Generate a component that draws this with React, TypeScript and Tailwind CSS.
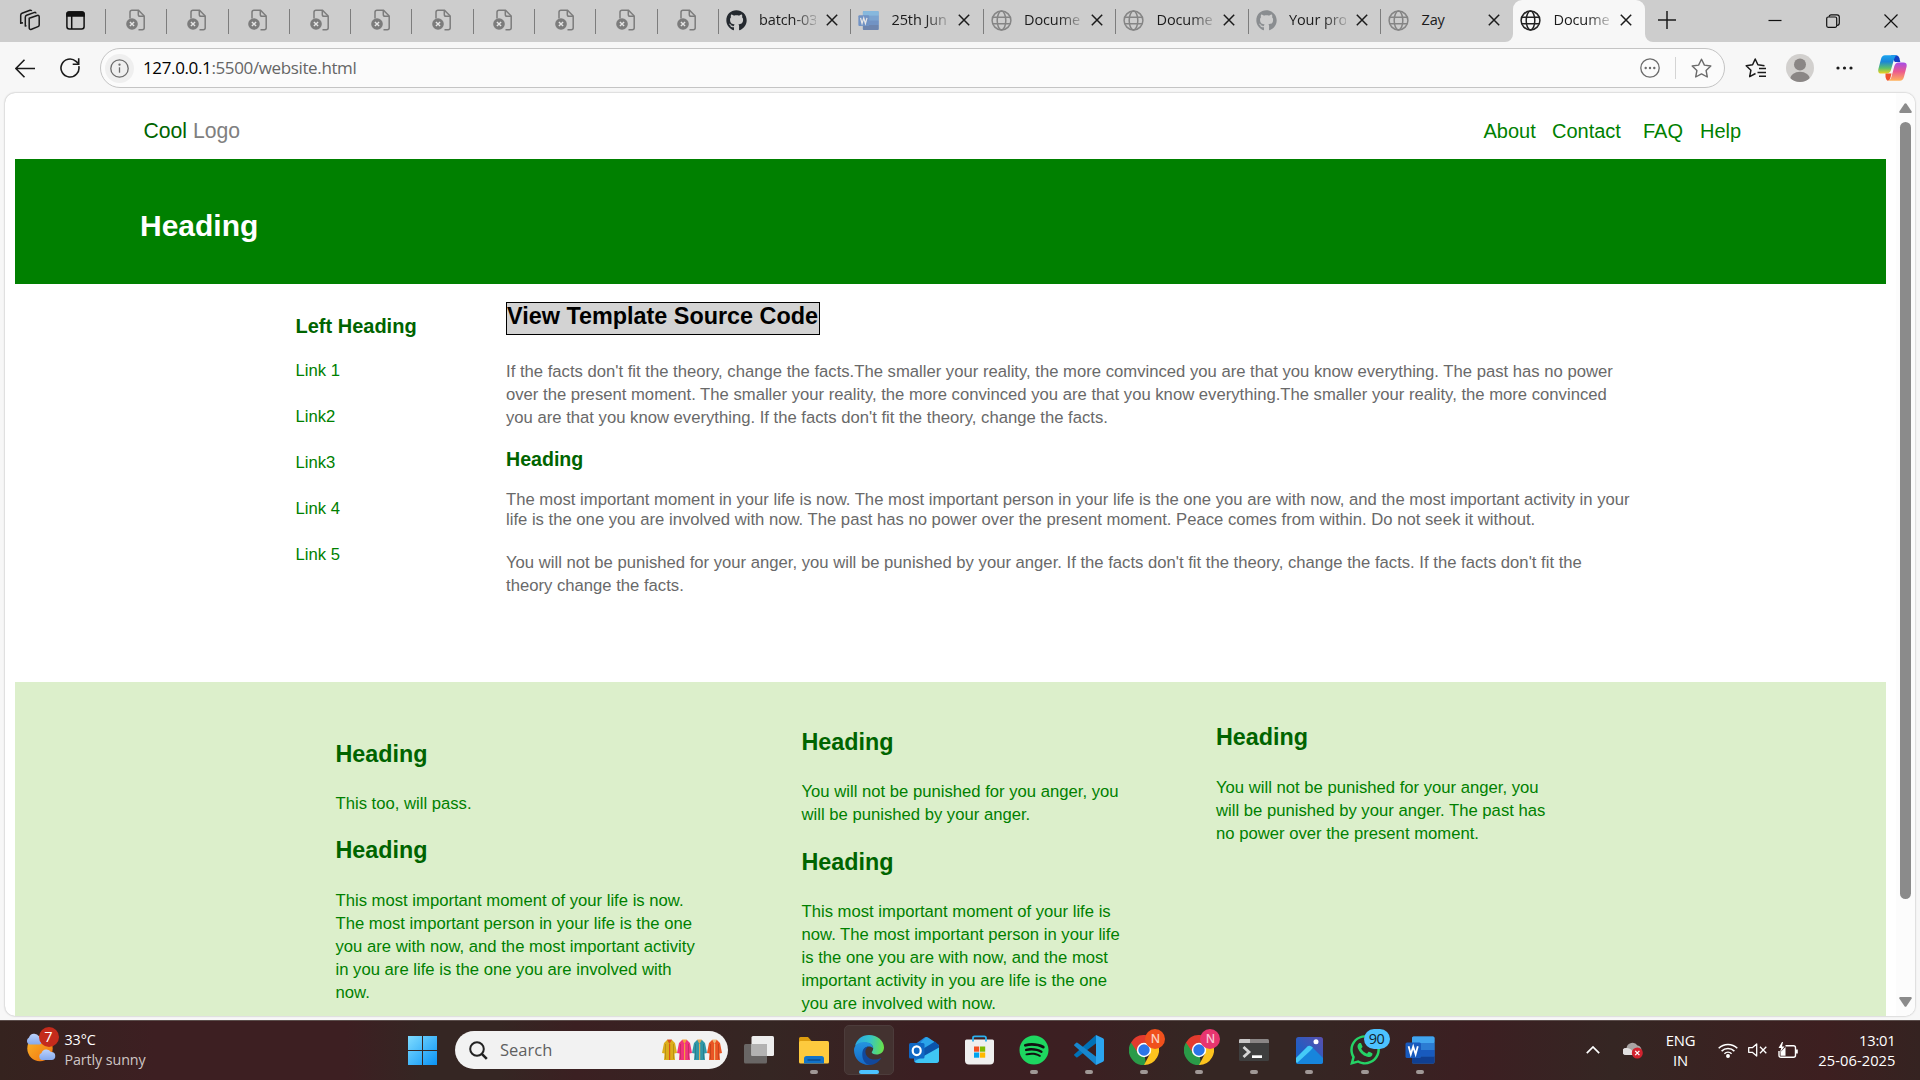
import React from 'react';
import { FaGithub, FaSpotify, FaWhatsapp } from 'react-icons/fa';

/* ---------- browser icons ---------- */

function BrokenPageIcon() {
  return (
    <svg width="20" height="22" viewBox="0 0 20 22" fill="none" stroke="#7c7c7c" strokeWidth="1.5">
      <path d="M4 9.5V3.2Q4 1.2 6 1.2H12.5L18.2 7V18.8Q18.2 20.8 16.2 20.8H12.5" />
      <path d="M12.3 1.4V5.4Q12.3 7.2 14 7.2H18" />
      <circle cx="6" cy="15" r="5.8" fill="#7c7c7c" stroke="none" />
      <path d="M3.9 12.9l4.2 4.2M8.1 12.9l-4.2 4.2" stroke="#e4e4e4" strokeWidth="1.4" />
    </svg>
  );
}

function GlobeIcon({ color }: { color: string }) {
  return (
    <svg width="21" height="21" viewBox="0 0 21 21" fill="none" stroke={color} strokeWidth="1.5">
      <circle cx="10.5" cy="10.5" r="9.4" />
      <ellipse cx="10.5" cy="10.5" rx="4.3" ry="9.4" />
      <path d="M1.8 7.2h17.4M1.8 13.8h17.4" />
    </svg>
  );
}

function WordIcon({ size }: { size: number }) {
  return (
    <svg width={size} height={size} viewBox="0 0 30 30">
      <rect x="7" y="1.5" width="22.5" height="27" rx="1.5" fill="#2b7cd3" />
      <rect x="7" y="1.5" width="22.5" height="7" rx="1.5" fill="#41a5ee" />
      <rect x="7" y="8" width="22.5" height="7" fill="#2b7cd3" />
      <rect x="7" y="15" width="22.5" height="6.5" fill="#185abd" />
      <path d="M7 21.5h22.5V27a1.5 1.5 0 0 1-1.5 1.5H8.5A1.5 1.5 0 0 1 7 27z" fill="#103f91" />
      <rect x="0.5" y="7.5" width="15.5" height="15.5" rx="1.5" fill="#185abd" />
      <path d="M3.6 11.2l2.2 8 2.4-7.6 2.4 7.6 2.2-8" fill="none" stroke="#fff" strokeWidth="1.8" />
    </svg>
  );
}

function CloseIcon() {
  return (
    <svg width="12" height="12" viewBox="0 0 12 12" stroke="#1b1b1b" strokeWidth="1.5">
      <path d="M.8.8l10.4 10.4M11.2.8L.8 11.2" />
    </svg>
  );
}

type Kind = 'github' | 'githubDim' | 'word' | 'globe' | 'globeDark';

function TabIcon({ kind }: { kind: Kind }) {
  if (kind === 'github') return <FaGithub size={21} color="#24292f" />;
  if (kind === 'githubDim') return <FaGithub size={21} color="#8a8d90" />;
  if (kind === 'word') return <span className="opacity-50"><WordIcon size={21} /></span>;
  return <GlobeIcon color={kind === 'globe' ? '#858585' : '#222222'} />;
}

function Tab({ kind, title, active }: { kind: Kind; title: string; active?: boolean }) {
  return (
    <div className={active
      ? 'relative -ml-px flex h-[42px] w-[132.5px] items-center rounded-t-[9px] bg-[#f7f7f7] pb-[2px] pl-[7.5px]'
      : 'flex h-[42px] w-[132.5px] items-center pb-[2px] pl-[7px]'}>
      {active && (
        <>
          <svg className="absolute bottom-0 -left-2" width="8" height="8"><path d="M8 0V8H0A8 8 0 0 0 8 0" fill="#f7f7f7" /></svg>
          <svg className="absolute -right-2 bottom-0" width="8" height="8"><path d="M0 0V8H8A8 8 0 0 1 0 0" fill="#f7f7f7" /></svg>
        </>
      )}
      <span className="flex w-[21px] shrink-0 justify-center"><TabIcon kind={kind} /></span>
      <span className={title === 'Zay'
        ? 'ml-[12px] w-[57px] overflow-hidden text-[14.5px] leading-5 tracking-[-0.1px] whitespace-nowrap text-[#1b1b1b]'
        : 'ml-[12px] w-[57px] overflow-hidden [mask-image:linear-gradient(to_right,#000_60%,rgba(0,0,0,0.2)_100%)] text-[14.5px] leading-5 tracking-[-0.1px] whitespace-nowrap text-[#1b1b1b]'}>
        {title}
      </span>
      <span className="ml-[10px]"><CloseIcon /></span>
    </div>
  );
}

function Sep() {
  return <div className="-ml-px h-[25px] w-px shrink-0 bg-[#7d7d7d]" />;
}

function TabStrip() {
  return (
    <div className="flex h-[42px] items-center bg-[#cdcdcd]">
      <div className="flex w-[106px] shrink-0 items-center pb-[2px] pl-[19px]">
        <svg width="22" height="22" viewBox="0 0 22 22" fill="none" stroke="#1b1b1b" strokeWidth="1.5" strokeLinejoin="round">
          <path d="M10.2 9.3l8-2.8q2-.6 2 1.4v8q0 1.2-1.2 1.7l-6.5 2.6q-2.3.8-2.3-1.5z" />
          <path d="M7.5 16.6L6.3 17V8.2q0-1.4 1.3-1.9l8-2.9q1.3-.3 1.3 1.2" />
          <path d="M4 13.8l-2.3.5V6.2q0-1.4 1.3-1.9L11 1.3q1.3-.4 1.6.8" />
        </svg>
        <svg className="ml-[25px]" width="19" height="19" viewBox="0 0 19 19" fill="none" stroke="#111" strokeWidth="1.5">
          <rect x=".9" y=".9" width="17.2" height="17.2" rx="2.5" />
          <path d="M1 5V3q0-2 2-2h13q2 0 2 2v2z" fill="#111" />
          <path d="M5.7 5v13" />
        </svg>
      </div>
      {Array.from({ length: 10 }, (_, i) => (
        <React.Fragment key={i}>
          <Sep />
          <div className="flex w-[61.3px] shrink-0 justify-center pr-[2px] pb-[2px]"><BrokenPageIcon /></div>
        </React.Fragment>
      ))}
      <Sep /><Tab kind="github" title="batch-03" />
      <Sep /><Tab kind="word" title="25th Jun" />
      <Sep /><Tab kind="globe" title="Docume" />
      <Sep /><Tab kind="globe" title="Docume" />
      <Sep /><Tab kind="githubDim" title="Your pro" />
      <Sep /><Tab kind="globe" title="Zay" />
      <Tab kind="globeDark" title="Docume" active />
      <svg className="mb-[3px] ml-[12.5px]" width="18" height="18" viewBox="0 0 18 18" stroke="#1b1b1b" strokeWidth="1.5"><path d="M9 0v18M0 9h18" /></svg>
      <div className="ml-auto flex items-center pr-[22px]">
        <svg width="14" height="14" viewBox="0 0 14 14" stroke="#111" strokeWidth="1.2"><path d="M.5 6.5h13" /></svg>
        <svg className="ml-[44px]" width="14" height="14" viewBox="0 0 14 14" fill="none" stroke="#111" strokeWidth="1.2">
          <rect x=".7" y="3" width="10" height="10.3" rx="1.5" />
          <path d="M3.2 2.8Q3.2.8 5.2.8H11q2.3 0 2.3 2.3V9q0 2.2-2.3 2.5" />
        </svg>
        <svg className="ml-[44px]" width="14" height="14" viewBox="0 0 14 14" stroke="#111" strokeWidth="1.2"><path d="M.5.5l13 13M13.5.5l-13 13" /></svg>
      </div>
    </div>
  );
}

function Toolbar() {
  return (
    <div className="flex h-[51px] items-center bg-[#f7f7f7] pt-px">
      <svg className="ml-[15px]" width="20" height="19" viewBox="0 0 20 19" fill="none" stroke="#1b1b1b" strokeWidth="1.6"><path d="M20 9.5H1M9.5.8L.9 9.5l8.6 8.7" /></svg>
      <svg className="ml-[25px]" width="20" height="20" viewBox="0 0 20 20" fill="none" stroke="#1b1b1b" strokeWidth="1.6">
        <path d="M18.8 8.2A9 9 0 1 1 16 3.3L18.6 5.6" /><path d="M18.7.3v5.900h-6" />
      </svg>
      <div className="ml-[20px] flex h-[40px] w-[1625px] shrink-0 items-center rounded-full border border-[#c4c4c4] bg-[#fbfbfb]">
        <span className="ml-[4px] flex h-[29px] w-[29px] items-center justify-center rounded-full bg-[#efefef]">
          <svg width="19" height="19" viewBox="0 0 19 19" fill="none" stroke="#6b6b6b" strokeWidth="1.3"><circle cx="9.5" cy="9.5" r="8.7" /><path d="M9.5 8.3v5.4" /><circle cx="9.5" cy="5.7" r=".5" /></svg>
        </span>
        <span className="ml-[9px] text-[17px] leading-6 tracking-[-0.37px] text-[#666]"><span className="text-black">127.0.0.1</span>:5500/website.html</span>
        <div className="ml-auto flex items-center pr-[12px]">
          <svg width="20" height="20" viewBox="0 0 20 20" fill="none" stroke="#6b6b6b" strokeWidth="1.3"><circle cx="10" cy="10" r="9.2" /><g fill="#6b6b6b" stroke="none"><circle cx="5.7" cy="10" r="1.2" /><circle cx="10" cy="10" r="1.2" /><circle cx="14.3" cy="10" r="1.2" /></g></svg>
          <span className="mr-[15px] ml-[15px] h-[22px] w-px bg-[#d4d4d4]" />
          <svg width="21" height="21" viewBox="0 0 21 21" fill="none" stroke="#6b6b6b" strokeWidth="1.4" strokeLinejoin="round"><path d="M10.5 1.2l2.9 5.9 6.4.9-4.7 4.5 1.2 6.5-5.8-3.1L4.7 19l1.2-6.5L1.2 8l6.4-.9z" /></svg>
        </div>
      </div>
      <svg className="ml-[19.5px]" width="21" height="20" viewBox="0 0 21 20" fill="none" stroke="#1b1b1b" strokeWidth="1.5" strokeLinejoin="round"><path d="M10.5 15.5L4.7 18.7l1.2-6.5L1.2 7.7l6.4-.9L10.2 1l2.7 5.8 6.6.9" /><path d="M14 10.5h7M12.5 14.4H21M14 18.3h7" /></svg>
      <span className="ml-[20.5px] flex h-[28px] w-[28px] overflow-hidden rounded-full bg-[#d2d0ce]">
        <svg width="28" height="28" viewBox="0 0 28 28" fill="#8a8685"><circle cx="14" cy="10.5" r="6" /><ellipse cx="14" cy="25" rx="10" ry="7.2" /></svg>
      </span>
      <svg className="ml-[22px]" width="17" height="4" viewBox="0 0 17 4" fill="#1b1b1b"><circle cx="2" cy="2" r="1.6" /><circle cx="8.5" cy="2" r="1.6" /><circle cx="15" cy="2" r="1.6" /></svg>
      <svg className="ml-[25px]" width="29" height="26" viewBox="0 0 29 26">
        <defs>
          <linearGradient id="cpa" x1="0" y1="0" x2="0" y2="1"><stop offset="0" stopColor="#1aa5f0" /><stop offset=".35" stopColor="#1b86d8" /><stop offset=".7" stopColor="#5cc06b" /><stop offset="1" stopColor="#f2d21c" /></linearGradient>
          <linearGradient id="cpb" x1="0" y1="0" x2="0" y2="1"><stop offset="0" stopColor="#a54ce8" /><stop offset=".5" stopColor="#ec5a8f" /><stop offset="1" stopColor="#ffb35c" /></linearGradient>
        </defs>
        <path d="M13 .3h5q2.5 0 3.4 3l.9 3.7h-5.5z" fill="#1441c4" />
        <path d="M7 .3h12q-2 .5-3 4l-3 10.5q-1 3.8-4.5 3.8H3.5Q-.6 18.6.4 14L3 4Q4 .3 7 .3z" fill="url(#cpa)" />
        <path d="M7.5 18.6h6l-1 4q-.5 2.5-2.5 3.1Q8.3 25.7 7.5 22z" fill="#f0512e" />
        <path d="M22 25.7H10q2.5-.5 3.5-4L16.3 11.3Q17.3 7.5 20.5 7.5h5q4 0 3 4.5L26 21.7q-1 4-4 4z" fill="url(#cpb)" />
      </svg>
    </div>
  );
}

/* ---------- web page ---------- */

function Lines({ lines, tight }: { lines: string[]; tight?: boolean }) {
  return (
    <p className={tight ? 'text-[16.667px] leading-[20px]' : 'text-[16.667px] leading-[23px]'}>
      {lines.map((l) => <span key={l} className="block whitespace-nowrap">{l}</span>)}
    </p>
  );
}

function FootHeading() {
  return <h2 className="text-[23.333px] leading-[28px] font-bold text-[#006400]">Heading</h2>;
}

function Page() {
  return (
    <div className="flex h-[924px] bg-[#f7f7f7] pr-[5px] pb-px pl-[5px]">
      <div className="flex w-full overflow-hidden rounded-[10px] bg-white shadow-[0_0_2px_rgba(0,0,0,0.35)]">
        <div className="ml-[10px] w-[1871px] shrink-0 font-['Liberation_Sans',Arial,sans-serif]">
          <header className="flex h-[66px] pt-[26px] leading-6">
            <div className="ml-[128.5px] text-[21.2px] text-[#808080]"><span className="text-[#006400]">Cool</span> Logo</div>
            <nav className="ml-auto flex w-[402.5px] text-[20px] text-[#008000]">
              <a className="w-[68.5px]">About</a><a className="w-[91px]">Contact</a><a className="w-[57px]">FAQ</a><a>Help</a>
            </nav>
          </header>
          <section className="h-[125px] bg-[#008000] pt-[49px] pl-[125px]">
            <h1 className="text-[30px] leading-[36px] font-bold text-white">Heading</h1>
          </section>
          <main className="flex h-[398px] text-[#696969]">
            <aside className="ml-[280.5px] w-[210.5px] pt-[30px]">
              <h3 className="text-[20px] leading-6 font-bold text-[#006400]">Left Heading</h3>
              <ul className="mt-[21px] text-[16.667px] leading-[23px] text-[#008000]">
                {['Link 1', 'Link2', 'Link3', 'Link 4', 'Link 5'].map((l) => <li key={l} className="mb-[23px]">{l}</li>)}
              </ul>
            </aside>
            <article className="pt-[18px]">
              <h2 className="h-[33px] w-[314px] border border-black bg-[#d3d3d3] text-[23.4px] leading-[26px] font-bold whitespace-nowrap text-black">View Template Source Code</h2>
              <div className="mt-[25px]"><Lines lines={[
                "If the facts don't fit the theory, change the facts.The smaller your reality, the more comvinced you are that you know everything. The past has no power",
                'over the present moment. The smaller your reality, the more convinced you are that you know everything.The smaller your reality, the more convinced',
                "you are that you know everything. If the facts don't fit the theory, change the facts.",
              ]} /></div>
              <h3 className="mt-[18px] text-[19.6px] leading-6 font-bold text-[#006400]">Heading</h3>
              <div className="mt-[19px]"><Lines tight lines={[
                'The most important moment in your life is now. The most important person in your life is the one you are with now, and the most important activity in your',
                'life is the one you are involved with now. The past has no power over the present moment. Peace comes from within. Do not seek it without.',
              ]} /></div>
              <div className="mt-[21px]"><Lines lines={[
                "You will not be punished for your anger, you will be punished by your anger. If the facts don't fit the theory, change the facts. If the facts don't fit the",
                'theory change the facts.',
              ]} /></div>
            </article>
          </main>
          <footer className="flex h-[334px] bg-[#dcefcb] pl-[320.5px] text-[#008000]">
            <div className="w-[466px] pt-[58px]">
              <FootHeading />
              <div className="mt-[24px]"><Lines lines={['This too, will pass.']} /></div>
              <div className="mt-[21px]"><FootHeading /></div>
              <div className="mt-[25px]"><Lines lines={['This most important moment of your life is now.', 'The most important person in your life is the one', 'you are with now, and the most important activity', 'in you are life is the one you are involved with', 'now.']} /></div>
            </div>
            <div className="w-[414.5px] pt-[46px]">
              <FootHeading />
              <div className="mt-[24px]"><Lines lines={['You will not be punished for you anger, you', 'will be punished by your anger.']} /></div>
              <div className="mt-[22px]"><FootHeading /></div>
              <div className="mt-[24px]"><Lines lines={['This most important moment of your life is', 'now. The most important person in your life', 'is the one you are with now, and the most', 'important activity in you are life is the one', 'you are involved with now.']} /></div>
            </div>
            <div className="pt-[41px]">
              <FootHeading />
              <div className="mt-[25px]"><Lines lines={['You will not be punished for your anger, you', 'will be punished by your anger. The past has', 'no power over the present moment.']} /></div>
            </div>
          </footer>
        </div>
        <div className="ml-auto flex w-[19px] flex-col items-center bg-[#fcfcfc] pt-[10px] pb-[9px]">
          <svg width="13" height="10" viewBox="0 0 13 10"><path d="M5.5.8q1-1.2 2 0L12.7 8.5q.4 1.5-1 1.5H1.3Q-.1 10 .3 8.5z" fill="#8b8b8b" /></svg>
          <div className="mt-[9px] h-[777px] w-[11px] rounded-full bg-[#8b8b8b]" />
          <svg className="mt-auto" width="13" height="10" viewBox="0 0 13 10"><path d="M5.5 9.2q1 1.2 2 0L12.7 1.5q.4-1.5-1-1.5H1.3Q-.1 0 .3 1.5z" fill="#8b8b8b" /></svg>
        </div>
      </div>
    </div>
  );
}

/* ---------- taskbar ---------- */

function Weather() {
  return (
    <div className="relative h-[34px] w-[36px]">
      <svg width="36" height="34" viewBox="0 0 36 34">
        <defs>
          <linearGradient id="sun" x1="0" y1="0" x2="1" y2="1"><stop offset="0" stopColor="#fbb829" /><stop offset="1" stopColor="#f0700f" /></linearGradient>
          <linearGradient id="cl" x1="0" y1="0" x2="0" y2="1"><stop offset="0" stopColor="#bcd2fb" /><stop offset="1" stopColor="#84a9ee" /></linearGradient>
        </defs>
        <circle cx="15" cy="15.500" r="12.700" fill="url(#sun)" />
        <path d="M4 11.500a4 4 0 0 1 0-7A5.500 5.500 0 0 1 14 3.500 4.400 4.400 0 0 1 15 11.500z" fill="url(#cl)" />
        <path d="M16.500 27a3.800 3.800 0 0 1 0-7 5.300 5.300 0 0 1 9.500-1 4 4 0 0 1 .5 8z" fill="url(#cl)" />
      </svg>
      <span className="absolute -top-[6px] left-[13.5px] flex h-[20px] w-[20px] items-center justify-center rounded-full bg-[#c42b1c] text-[14.5px] text-white">7</span>
    </div>
  );
}

function Coat({ a, b }: { a: string; b: string }) {
  return (
    <svg width="15" height="22" viewBox="0 0 15 22">
      <path d="M5 1h5l3 3 2 10-2.5.5L13 21H2l.5-6.5L0 14 2 4z" fill={a} />
      <path d="M5 .5h5L7.5 5zM7 5h1.2v16H7z" fill={b} />
      <path d="M3.500 5v15M11.500 5v15" stroke="#000" strokeOpacity=".2" strokeWidth=".8" />
    </svg>
  );
}

function TaskView() {
  return (
    <svg width="30" height="28" viewBox="0 0 30 28">
      <rect x="0" y="8" width="23" height="19.5" rx="1.5" fill="#696665" />
      <rect x="7.5" y="0" width="22.5" height="20" rx="1.5" fill="#ededed" />
      <rect x="7.5" y="8" width="15.5" height="12" fill="#b3b2b2" />
    </svg>
  );
}

function Explorer() {
  return (
    <svg width="30" height="27" viewBox="0 0 30 27">
      <path d="M0 1.5Q0 0 1.5 0H9l3.500 4H28V12H0z" fill="#dd9d0f" />
      <rect x="0" y="4" width="30" height="22.5" rx="1.5" fill="#fdca3e" />
      <path d="M5 26.5V21.5q0-2.5 2.5-2.5h15q2.5 0 2.5 2.5v5z" fill="#1173c9" />
      <path d="M8.5 23h13" stroke="#0a4b8d" strokeWidth="1.5" />
    </svg>
  );
}

function Edge() {
  return (
    <svg width="30" height="30" viewBox="0 0 30 30">
      <defs>
        <linearGradient id="ea" x1="0" y1=".3" x2="1" y2=".4"><stop offset="0" stopColor="#2aa7e6" /><stop offset=".5" stopColor="#35c3c9" /><stop offset="1" stopColor="#68e24a" /></linearGradient>
        <linearGradient id="eb" x1="0" y1="0" x2="0" y2="1"><stop offset="0" stopColor="#2494e0" /><stop offset="1" stopColor="#1468c6" /></linearGradient>
      </defs>
      <path d="M1 11C2.5 4.5 8 0 15 0c8.5 0 15 6 15 12.5 0 4.5-3.5 7-7.5 7-3 0-4.8-1.2-4.8-2.3 0-.8 1.5-1.5 1.5-4 0-2.7-2.7-5.5-7-5.5C6.5 7.7 2.5 9.5 1 11z" fill="url(#ea)" />
      <path d="M0 15c0-5 5-8 10.5-8 5 0 8.7 2.8 8.7 6.2-1-1.2-2.7-1.7-4.2-1.7-4 0-6 3-6 6.5C9 24 13 29.5 18 29.7 8 31.5 0 24.5 0 15z" fill="url(#eb)" />
      <path d="M15 11.5c-3 1-3.7 3.5-3.5 6 .4 4.5 5 7.5 10 7 3-.3 4.5-1.5 5.7-1.5C25 27 20.5 30 15.5 30 11 29 8 24.5 8.3 18.5 8.500 14 11 11.500 15 11.500z" fill="#12489b" />
    </svg>
  );
}

function Outlook() {
  return (
    <svg width="30" height="28" viewBox="0 0 30 28">
      <path d="M5 9L15.5 1.5q1.5-1 3 0L30 9v15q0 3-3 3H8q-3 0-3-3z" fill="#1d7fd6" />
      <path d="M12 6L17 1q1 0 2 .5l7 4.7L13 15z" fill="#2aa4ea" />
      <path d="M26 5.5l4 4v3L14 23l-2-9z" fill="#0b54ab" />
      <path d="M30 11.5V24q0 3-3 3H9q-2.500 0-3.500-1.700z" fill="#3fc6f5" />
      <rect x="0" y="7" width="15.5" height="15.5" rx="1.5" fill="#0f67c4" />
      <ellipse cx="7.7" cy="14.7" rx="4" ry="4.4" fill="none" stroke="#fff" strokeWidth="2.2" />
    </svg>
  );
}

function Store() {
  return (
    <svg width="29" height="30" viewBox="0 0 29 30">
      <path d="M0 6q0-1.500 1.500-1.500h26Q29 4.500 29 6v19.500q0 4-4 4H4q-4 0-4-4z" fill="#efefef" />
      <path d="M8 6.500V3q0-1.700 1.700-1.700h9.600Q21 1.300 21 3v3.500" fill="none" stroke="#2cb0ee" strokeWidth="1.8" />
      <rect x="9" y="11.5" width="5.2" height="5.2" fill="#f25022" /><rect x="15" y="11.5" width="5.2" height="5.2" fill="#7fba00" />
      <rect x="9" y="17.5" width="5.2" height="5.2" fill="#00a4ef" /><rect x="15" y="17.5" width="5.2" height="5.2" fill="#ffb900" />
    </svg>
  );
}

function VsCode() {
  return (
    <svg width="30" height="30" viewBox="0 0 30 30">
      <path d="M22 0L22.5 8 3.5 22.3q-.7.5-1.3 0L.4 20.6q-.7-.7 0-1.4z" fill="#0072b8" />
      <path d="M22 30l.5-8L3.5 7.7q-.7-.5-1.3 0L.4 9.4q-.7.7 0 1.4z" fill="#1787cf" />
      <path d="M22 0l7 3.3q1 .5 1 1.7v20q0 1.2-1 1.7L22 30z" fill="#2ba5f0" />
    </svg>
  );
}

function Chrome() {
  return (
    <svg width="30" height="30" viewBox="0 0 30 30">
      <path d="M15 15l2 15A15 15 0 0 1 2 7.5z" fill="#2a9b48" />
      <path d="M21.1 18.5L15 30a15 15 0 0 0 13-22.5H15z" fill="#fcc31e" />
      <path d="M15 7.5h13A15 15 0 0 0 2 7.5L9 18z" fill="#e33b2e" />
      <circle cx="15" cy="15" r="7.2" fill="#fff" /><circle cx="15" cy="15" r="5.7" fill="#2b75e8" />
    </svg>
  );
}

function Terminal() {
  return (
    <svg width="30" height="22" viewBox="0 0 30 22">
      <rect width="30" height="22" rx="1.5" fill="#3f3f3f" />
      <path d="M0 4V1.5Q0 0 1.5 0H28.5Q30 0 30 1.5V4z" fill="#8a8686" />
      <path d="M0 4V1.5Q0 0 1.5 0H11v4z" fill="#c9c7c7" />
      <path d="M4.5 8l5.5 5-5.5 5" fill="none" stroke="#d6d6d6" strokeWidth="2.8" />
      <rect x="13" y="16.3" width="10" height="2.7" fill="#fff" />
    </svg>
  );
}

function Photos() {
  return (
    <svg width="27" height="27" viewBox="0 0 27 27">
      <defs><linearGradient id="ph" x1="0" y1="1" x2="1" y2="0"><stop offset=".3" stopColor="#1e5fc4" /><stop offset="1" stopColor="#5a4fae" /></linearGradient></defs>
      <rect width="27" height="27" rx="2.5" fill="url(#ph)" />
      <path d="M0 21L11.5 9.5q2-1.5 4 0L27 21v3.5q0 2.5-2.5 2.5h-22Q0 27 0 24.5z" fill="#1785dc" />
      <path d="M1 26L14 14l3-3.2Q13.5 7.5 11.5 9.5L0 21v3.5z" fill="#45cbf7" />
      <circle cx="20" cy="4.7" r="2.5" fill="#fff" />
    </svg>
  );
}

function TaskbarApp({ children, running = true, active }: { children: React.ReactNode; running?: boolean; active?: boolean }) {
  return (
    <div className="flex w-[55.05px] shrink-0 justify-center">
      <div className={active
        ? 'relative flex h-[50px] w-[50px] items-center justify-center rounded-[5px] border border-[#4c3c3b] bg-[#433230]'
        : 'relative flex h-[50px] w-[50px] items-center justify-center'}>
        {children}
        {active
          ? <span className="absolute bottom-0 left-[14px] h-[4px] w-[20px] rounded-full bg-[#4cc2ff]" />
          : running && <span className="absolute bottom-px left-[21px] h-[4px] w-[8px] rounded-full bg-[#a09896]" />}
      </div>
    </div>
  );
}

function ProfileBadge({ pink }: { pink?: boolean }) {
  return (
    <span className={pink
      ? 'absolute top-[4px] left-[26px] flex h-[20px] w-[20px] items-center justify-center rounded-full bg-[#e8356f] text-[12px] font-semibold text-[#f9c3d4]'
      : 'absolute top-[4px] left-[26px] flex h-[20px] w-[20px] items-center justify-center rounded-full bg-[#f0501c] text-[12px] font-semibold text-[#fbd0c0]'}>N</span>
  );
}

function Tray() {
  return (
    <div className="ml-auto flex items-center pr-[24.5px] pb-px text-white">
      <svg width="14" height="8" viewBox="0 0 14 8" fill="none" stroke="#fff" strokeWidth="1.7"><path d="M.8 7.2L7 1l6.2 6.2" /></svg>
      <svg className="ml-[23px]" width="20" height="18" viewBox="0 0 20 18">
        <path d="M3.5 14a3.5 3.5 0 0 1 0-7A6 6 0 0 1 14.5 4.5 4.8 4.8 0 0 1 14 14z" fill="#a8a4a3" />
        <path d="M3 14a3.5 3.5 0 0 1 0-7q5-1 9 7z" fill="#e2e0e0" />
        <circle cx="14.3" cy="12" r="5.5" fill="#d2232f" /><path d="M12.2 9.9l4.2 4.2M16.4 9.9l-4.2 4.2" stroke="#fff" strokeWidth="1.3" />
      </svg>
      <div className="ml-[18px] w-[40px] text-center text-[14.8px] leading-5 tracking-[-0.2px]">ENG<br />IN</div>
      <svg className="ml-[17px]" width="20" height="16" viewBox="0 0 20 16" fill="none" stroke="#fff" strokeWidth="1.5">
        <path d="M.7 6.3a13 13 0 0 1 18.6 0" /><path d="M3.6 9.1a9 9 0 0 1 12.8 0" /><path d="M6.4 11.8a5.2 5.2 0 0 1 7.2 0" /><circle cx="10" cy="14" r="1.2" fill="#fff" />
      </svg>
      <svg className="ml-[10px]" width="19" height="14" viewBox="0 0 19 14" fill="none" stroke="#fff" strokeWidth="1.3" strokeLinejoin="round">
        <path d="M.7 4.7h3.6L8.7.9v12.2L4.3 9.3H.7z" /><path d="M12 3.8l6.3 6.4M18.3 3.8L12 10.2" />
      </svg>
      <svg className="ml-[11px]" width="20" height="17" viewBox="0 0 20 17" fill="none" stroke="#fff" strokeWidth="1.4">
        <path d="M7.5 3.7H15.5q2 0 2 2v7.5q0 2-2 2H3q-2 0-2-2V9" /><path d="M18.8 7.5v4" strokeWidth="2" />
        <path d="M2.5 13.7V10l5-5v8.7z" fill="#fff" stroke="none" /><path d="M4 0L.5 6h2.7L2 10.5 6.5 4.5H4L5 0z" fill="#fff" stroke="none" />
      </svg>
      <div className="ml-[20px] w-[78px] pb-px text-right text-[14.7px] leading-5 whitespace-nowrap">
        <div className="tracking-[-0.2px]">13:01</div><div className="-ml-2 tracking-[0.05px]">25-06-2025</div>
      </div>
    </div>
  );
}

function Taskbar() {
  return (
    <div className="flex h-[60px] items-center border-t border-[#5b4d4b] bg-[linear-gradient(90deg,#35231f_0%,#3d1f22_8%,#3d1f22_18%,#352623_22%,#352623_26%,#3b2022_30%,#352623_40%,#3b1f22_48%,#3c1f22_56%,#352623_62%,#352623_68%,#3c1f22_77%,#352623_84%,#3d1f20_95%,#352321_100%)]">
      <div className="flex w-[408px] shrink-0 items-center pb-[2px] pl-[25px]">
        <Weather />
        <div className="ml-[3.5px] text-[14.3px] leading-5 tracking-[-0.1px] text-white"><div>33°C</div><div className="text-[#cfc6c5]">Partly sunny</div></div>
      </div>
      <svg width="29" height="29" viewBox="0 0 29 29">
        <defs><linearGradient id="win" x1="0" y1="0" x2="1" y2="1"><stop offset="0" stopColor="#7fdcff" /><stop offset="1" stopColor="#0a93f5" /></linearGradient></defs>
        <path d="M0 0h14v14H0zM15 0h14v14H15zM0 15h14v14H0zM15 15h14v14H15z" fill="url(#win)" />
      </svg>
      <div className="mb-px ml-[18px] flex h-[38px] w-[273px] shrink-0 items-center rounded-full bg-[#f2f2f2] pr-[6px] pl-[14px]">
        <svg width="19" height="19" viewBox="0 0 19 19" fill="none" stroke="#222" strokeWidth="2"><circle cx="8" cy="8" r="6.8" /><path d="M12.8 12.8l5 5" strokeWidth="2.6" /></svg>
        <span className="ml-[12px] text-[16.5px] leading-6 text-[#5f5f5f]">Search</span>
        <div className="ml-auto flex">
          <Coat a="#dcae1c" b="#d9541c" /><Coat a="#f0337c" b="#f3a13c" /><Coat a="#2f97a8" b="#e0a85a" /><Coat a="#ea5423" b="#f0b878" />
        </div>
      </div>
      <div className="mb-px ml-[3.5px] flex">
        <TaskbarApp running={false}><TaskView /></TaskbarApp>
        <TaskbarApp><Explorer /></TaskbarApp>
        <TaskbarApp active><Edge /></TaskbarApp>
        <TaskbarApp running={false}><Outlook /></TaskbarApp>
        <TaskbarApp running={false}><Store /></TaskbarApp>
        <TaskbarApp><span className="flex rounded-full bg-[radial-gradient(#111_60%,transparent_64%)]"><FaSpotify size={30} color="#1ed760" /></span></TaskbarApp>
        <TaskbarApp><VsCode /></TaskbarApp>
        <TaskbarApp><Chrome /><ProfileBadge /></TaskbarApp>
        <TaskbarApp><Chrome /><ProfileBadge pink /></TaskbarApp>
        <TaskbarApp><Terminal /></TaskbarApp>
        <TaskbarApp><Photos /></TaskbarApp>
        <TaskbarApp><FaWhatsapp className="ml-px" size={34} color="#25d366" /><span className="absolute top-[4px] left-[24px] flex h-[20px] w-[26px] items-center justify-center rounded-full bg-[#4cc2ff] text-[14.5px] tracking-[-0.4px] text-[#12242e]">90</span></TaskbarApp>
        <TaskbarApp><WordIcon size={30} /></TaskbarApp>
      </div>
      <Tray />
    </div>
  );
}

export default function App() {
  return (
    <div className="flex h-[1080px] w-[1920px] flex-col overflow-hidden bg-[#f7f7f7] font-['Open_Sans',sans-serif]">
      <TabStrip />
      <Toolbar />
      <Page />
      <div className="h-[3px] shrink-0" />
      <Taskbar />
    </div>
  );
}
